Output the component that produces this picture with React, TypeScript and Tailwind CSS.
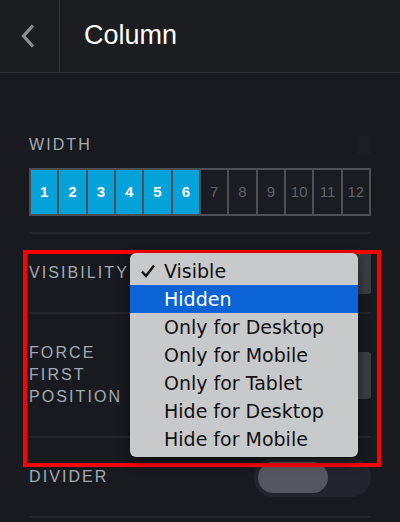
import React from "react";

const labelCls =
  "text-[16px] tracking-[0.13em] text-[#a3aab3] font-['Liberation_Sans',sans-serif] leading-[22px]";

const options = [
  "Visible",
  "Hidden",
  "Only for Desktop",
  "Only for Mobile",
  "Only for Tablet",
  "Hide for Desktop",
  "Hide for Mobile",
];

function WidthGrid({ selected }: { selected: number }) {
  const cells = Array.from({ length: 12 }, (_, i) => i + 1);
  return (
    <div className="grid grid-cols-12 gap-[2px] bg-[#4b4f56] p-[2px] h-[48px]">
      {cells.map((n) => {
        const on = n <= selected;
        return (
          <div
            key={n}
            className={`flex items-center justify-center text-[15px] ${
              on ? "bg-[#04a2d8] text-white font-bold" : "bg-[#1a1c21] text-[#5f636a]"
            }`}
          >
            {n}
          </div>
        );
      })}
    </div>
  );
}

export default function App() {
  return (
    <div className="relative w-[400px] h-[522px] overflow-hidden bg-[#181a20] font-['Liberation_Sans',sans-serif]">
      {/* header */}
      <div className="flex h-[73px] bg-[#1b1d21] border-b border-[#2c2e33]">
        <div className="w-[60px] flex items-center justify-center border-r border-[#2e3035]">
          <svg width="18" height="24" viewBox="0 0 18 24" className="-ml-[6px] -mt-[1px]">
            <path d="M15 1.5 L5.5 12 L15 22.5" fill="none" stroke="#8d8f93" strokeWidth="3.2" />
          </svg>
        </div>
        <div className="flex items-center pl-[24px] pb-[2px] text-[27px] text-white">Column</div>
      </div>

      <div className="px-[29px]">
        {/* width */}
        <div className="pt-[61px] pb-[16px] border-b-2 border-[#23252c]">
          <div className="flex items-center justify-between mb-[12px]">
            <span className={labelCls}>WIDTH</span>
            <div className="w-[14px] h-[18px] bg-[#1c1e24] rounded-[2px]" />
          </div>
          <WidthGrid selected={6} />
        </div>

        {/* visibility */}
        <div className="flex items-center justify-between h-[80px] border-b-2 border-[#23252c]">
          <span className={labelCls}>VISIBILITY</span>
          <div className="w-[220px] h-[43px] bg-[#3a3d43] rounded-[3px] mt-[-2px]" />
        </div>

        {/* force first */}
        <div className="flex items-center justify-between h-[124px] border-b-2 border-[#23252c]">
          <span className={labelCls}>
            FORCE
            <br />
            FIRST
            <br />
            POSITION
          </span>
          <div className="w-[220px] h-[47px] bg-[#3a3d43] rounded-[3px]" />
        </div>

        {/* divider */}
        <div className="flex items-center justify-between h-[80px] border-b-2 border-[#23252c]">
          <span className={labelCls}>DIVIDER</span>
          <div className="w-[117px] h-[39px] rounded-full bg-[#22252b] p-[4px] flex">
            <div className="w-[70px] h-[31px] rounded-full bg-[#54575d]" />
          </div>
        </div>
      </div>

      {/* annotation frame */}
      <div className="absolute left-[23px] top-[250px] w-[358px] h-[217px] border-[4px] border-[#ff0000]" />

      {/* open select menu */}
      <div className="absolute left-[130px] top-[253px] w-[228px] py-[4px] bg-[#c8c9cb] rounded-[6px] shadow-[0_4px_12px_rgba(0,0,0,0.5)] font-['DejaVu_Sans',sans-serif]">
        {options.map((o, i) => (
          <div
            key={o}
            className={`relative h-[28px] flex items-center pl-[34px] text-[19px] ${
              i === 1 ? "bg-[#0b63d5] text-white" : "text-[#111]"
            }`}
          >
            {i === 0 && (
              <svg width="16" height="16" viewBox="0 0 16 16" className="absolute left-[10px] top-[6px]">
                <path d="M2 8.5 L6 13 L14 2.5" fill="none" stroke="#111" strokeWidth="2.4" />
              </svg>
            )}
            {o}
          </div>
        ))}
      </div>
    </div>
  );
}
